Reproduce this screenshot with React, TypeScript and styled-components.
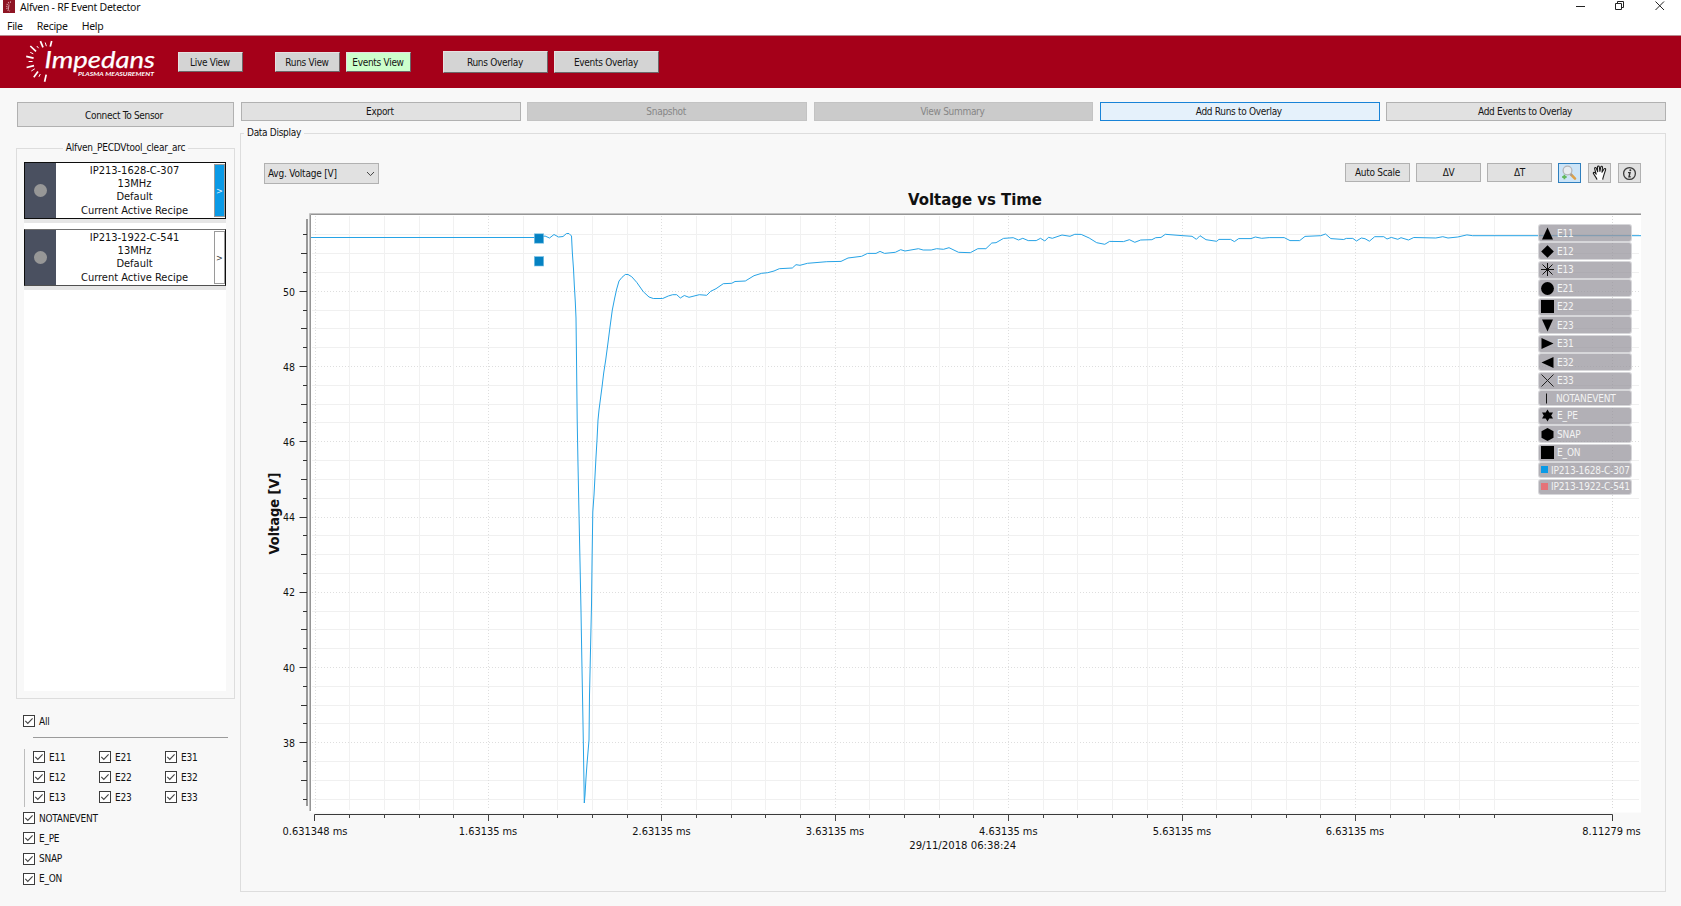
import React from "react";
import styled, { createGlobalStyle, css } from "styled-components";

const ui = `"DejaVu Sans Condensed", "DejaVu Sans", sans-serif`;

const GlobalStyle = createGlobalStyle`
  * { box-sizing: border-box; }
  html, body { margin: 0; padding: 0; background: #f8f8f8; overflow: hidden; }
  body { font-family: ${ui}; font-stretch: condensed; font-size: 10px; color: #111; }
`;

const Window = styled.div`
  width: 1681px;
  height: 906px;
  display: flex;
  flex-direction: column;
  background: #f8f8f8;
  white-space: nowrap;
`;

const Chrome = styled.div`
  height: 35px;
  background: #fff;
  font-family: "Noto Sans", "Open Sans", sans-serif;
  font-size: 10.5px;
  letter-spacing: -0.27px;
`;

const TitleBar = styled.div`
  height: 15px;
  display: flex;
  align-items: flex-start;
  padding-left: 3px;
  line-height: 14px;
`;

const TitleText = styled.span`
  margin-left: 5px;
  flex: 1;
`;

const MenuBar = styled.div`
  display: flex;
  gap: 14px;
  padding: 4px 0 0 7px;
  line-height: 14px;
`;

const Header = styled.header`
  height: 53px;
  background: #a50019;
  border-top: 1px solid #b98a90;
  display: flex;
  align-items: center;
  padding-left: 22px;
`;

const HeaderGroup = styled.div<{ $left: number; $gap: number }>`
  display: flex;
  gap: ${(p) => p.$gap}px;
  margin-left: ${(p) => p.$left}px;
`;

const HeaderButton = styled.button<{ $w: number; $h: number; $active?: boolean }>`
  width: ${(p) => p.$w}px;
  height: ${(p) => p.$h}px;
  padding: 0 1px 0 0;
  font: inherit;
  letter-spacing: -0.3px;
  color: #151515;
  background: ${(p) => (p.$active ? "#ccffcc" : "#d4d4d4")};
  border: 1px solid;
  border-color: #e6e1e2 #6d6668 #6d6668 #e6e1e2;
`;

const Body = styled.main`
  flex: 1;
  display: flex;
  padding: 14px 15px 0 16px;
`;

const Sidebar = styled.aside`
  width: 219px;
  display: flex;
  flex-direction: column;
`;

const FlatButton = styled.button<{ $w?: number; $h: number; $tone?: "off" | "hot" }>`
  ${(p) => (p.$w ? css`width: ${p.$w}px;` : css`flex: 1;`)}
  height: ${(p) => p.$h}px;
  padding: ${(p) => (p.$w ? "0" : "0 2px 0 0")};
  font: inherit;
  letter-spacing: -0.3px;
  color: ${(p) => (p.$tone === "off" ? "#868686" : "#151515")};
  background: ${(p) => (p.$tone === "off" ? "#cbcbcb" : p.$tone === "hot" ? "#e5f1fb" : "#e1e1e1")};
  border: 1px solid ${(p) => (p.$tone === "off" ? "#c3c3c3" : p.$tone === "hot" ? "#1883d7" : "#b1b1b1")};
`;

const ConnectButton = styled(FlatButton)`
  margin: 0 0 15px 1px;
  padding: 2px 3px 0 0;
`;

const Group = styled.fieldset<{ $h: number; $center?: boolean }>`
  margin: 0;
  padding: 0;
  min-width: 0;
  height: ${(p) => p.$h}px;
  border: 1px solid #dddddd;
  legend {
    margin: ${(p) => (p.$center ? "0 auto" : "0 0 0 3px")};
    padding: 0 3px;
    height: 12px;
    line-height: 12px;
    letter-spacing: ${(p) => (p.$center ? "-0.23px" : "-0.3px")};
  }
`;

const SensorList = styled.div`
  margin: 8px 8px 0 7px;
  height: 529px;
  background: #fff;
`;

const SensorCard = styled.div<{ $soft?: boolean }>`
  height: 57px;
  display: flex;
  background: #fff;
  border: 1px solid #0d0d0d;
  border-top-color: ${(p) => (p.$soft ? "#707070" : "#0d0d0d")};
  border-bottom-color: ${(p) => (p.$soft ? "#505050" : "#0d0d0d")};
`;

const CardShadow = styled.div`
  height: 4px;
  margin-bottom: 6px;
  background: #e6e6e6;
`;

const Lamp = styled.div`
  width: 31px;
  background: #4a5060;
  display: flex;
  align-items: center;
  justify-content: center;
  &::after {
    content: "";
    width: 13px;
    height: 13px;
    border-radius: 50%;
    background: #979797;
  }
`;

const SensorText = styled.div`
  flex: 1;
  text-align: center;
  font-size: 11px;
  line-height: 13.2px;
  padding: 1px 1px 0 0;
`;

const Expand = styled.div<{ $on?: boolean }>`
  width: 11px;
  margin: 1px 0;
  display: flex;
  align-items: center;
  justify-content: center;
  border: 1px solid #9a9a9a;
  background: ${(p) => (p.$on ? "#0a9ae6" : "#fff")};
  color: ${(p) => (p.$on ? "#e8f6ff" : "#333")};
  font-size: 9px;
`;

const Filters = styled.div`
  padding: 15px 7px 0;
  display: flex;
  flex-direction: column;
`;

const Check = styled.label`
  display: flex;
  align-items: center;
  height: 14px;
  gap: 4px;
  letter-spacing: -0.25px;
`;

const Divider = styled.div`
  height: 1px;
  background: #9b9b9b;
  margin: 9px 0 11px 10px;
`;

const CheckGrid = styled.div`
  display: grid;
  grid-template-columns: 66px 66px 50px;
  row-gap: 6px;
  padding: 1px 0 0 8px;
  border-left: 1px solid #bdbdbd;
  height: 58px;
  margin-left: 1px;
  align-content: start;
`;

const CheckColumn = styled.div`
  display: flex;
  flex-direction: column;
  gap: 6.3px;
  padding-top: 4px;
`;

const Content = styled.section`
  flex: 1;
  margin-left: 5px;
  display: flex;
  flex-direction: column;
`;

const ActionRow = styled.div`
  display: flex;
  gap: 6.5px;
  padding-left: 1px;
  margin-bottom: 6px;
`;

const PlotToolbar = styled.div`
  height: 25px;
  margin-top: 24px;
  padding: 0 24px 0 23px;
  display: flex;
  gap: 6px;
  align-items: flex-start;
`;

const Combo = styled.div`
  width: 115px;
  height: 21px;
  margin-right: auto;
  padding: 0 3px;
  display: flex;
  align-items: center;
  justify-content: space-between;
  background: #e1e1e1;
  border: 1px solid #b1b1b1;
  letter-spacing: -0.2px;
`;

const ToolButton = styled.button<{ $on?: boolean }>`
  width: 23px;
  height: 20px;
  padding: 0;
  margin-right: 1px;
  display: flex;
  align-items: center;
  justify-content: center;
  background: ${(p) => (p.$on ? "#cce4f7" : "#e1e1e1")};
  border: 1px solid ${(p) => (p.$on ? "#2f7fbe" : "#b1b1b1")};
  &:last-child { margin-right: 0; }
`;

const PlotArea = styled.div`
  position: relative;
  height: 690px;
`;

const Legend = styled.div`
  position: absolute;
  left: 1297px;
  top: 36px;
  width: 94px;
  display: flex;
  flex-direction: column;
  gap: 0.45px;
`;

const LegendItem = styled.div<{ $short?: boolean; $sep: number }>`
  height: ${(p) => (p.$short ? 16.3 : 18)}px;
  display: flex;
  align-items: center;
  gap: ${(p) => p.$sep}px;
  padding-left: 2px;
  color: #f3f3f3;
  letter-spacing: -0.15px;
  background: rgba(151, 149, 156, 0.74);
  border: 1px solid rgba(225, 225, 228, 0.8);
  border-radius: 3px;
`;

const CheckItem = ({ label }: { label: string }) => (
  <Check>
    <svg width="12" height="12" viewBox="0 0 12 12">
      <rect x="0.5" y="0.5" width="11" height="11" fill="#fff" stroke="#3c3c3c" />
      <path d="M2.3 5.8 L4.8 8.4 L9.6 3.4" fill="none" stroke="#444" strokeWidth="1.1" />
    </svg>
    {label}
  </Check>
);

const Sensor = ({ name, on }: { name: string; on?: boolean }) => (
  <>
    <SensorCard $soft={!on}>
      <Lamp />
      <SensorText>
        <div>{name}</div>
        <div>13MHz</div>
        <div>Default</div>
        <div>Current Active Recipe</div>
      </SensorText>
      <Expand $on={on}>&gt;</Expand>
    </SensorCard>
    <CardShadow />
  </>
);

const rays: [number, number, number, number][] = [
  [51.7, 41, 50.3, 46.6],
  [45.2, 42.5, 46.4, 46.2],
  [40.4, 41.2, 43, 47.4],
  [36.8, 46, 38.6, 48.2],
  [30.3, 46, 36, 51.3],
  [30.2, 52.3, 33.3, 53.8],
  [26.2, 56.4, 33.6, 58.2],
  [28.6, 61.5, 32.6, 61.5],
  [26.6, 67.5, 34, 65.6],
  [31.3, 71, 34.8, 68.8],
  [33.8, 77.3, 38, 71.6],
  [38.9, 76.8, 40.3, 74],
  [44.6, 81.8, 46.2, 74.6],
];

const Logo = () => (
  <svg width="136" height="46" viewBox="22 39 136 46">
    <g stroke="#fff">
      {rays.map(([a, b, c, d], i) => (
        <line key={i} x1={a} y1={b} x2={c} y2={d} strokeWidth={i % 2 ? 1 : 1.7} />
      ))}
    </g>
    <text x="44.5" y="68" fill="#fff" fontFamily="Lato, sans-serif" fontStyle="italic" fontWeight="400" fontSize="24" textLength="110.5" lengthAdjust="spacingAndGlyphs" stroke="#fff" strokeWidth="0.25">Impedans</text>
    <text x="78" y="76" fill="#fff" fontFamily="Lato, sans-serif" fontStyle="italic" fontWeight="700" fontSize="6" textLength="76" lengthAdjust="spacingAndGlyphs">PLASMA MEASUREMENT</text>
  </svg>
);

const AppIcon = () => (
  <svg width="12" height="13" viewBox="0 0 12 13">
    <rect width="12" height="13" fill="#8e1524" />
    <path d="M8 2 A4.6 4.6 0 0 0 7 11" fill="none" stroke="#d99aa2" strokeWidth="1.6" strokeDasharray="1 1" />
    <path d="M6 4.5 L5.4 9" stroke="#e7c0c5" strokeWidth="0.8" />
  </svg>
);

const WindowControls = () => (
  <svg width="106" height="15" viewBox="-5 0 106 15" fill="none" stroke="#222" strokeWidth="1">
    <path d="M-4 6.5 H5" />
    <path d="M35.5 3.5 H41.5 V9.5 H35.5 Z M37.5 3.5 V1.5 H43.5 V7.5 H41.5" />
    <path d="M75.5 1.5 L84 10 M84 1.5 L75.5 10" />
  </svg>
);

const MagnifierIcon = () => (
  <svg width="17" height="16" viewBox="0 0 17 16">
    <path d="M9.5 9 L14 13.6" stroke="#dda04a" strokeWidth="2.6" strokeLinecap="round" />
    <path d="M9 8.5 L11 10.5" stroke="#9b9b9b" strokeWidth="1.6" />
    <circle cx="6.5" cy="5.5" r="4.4" fill="#e8ecf0" stroke="#b5b5b8" strokeWidth="1.3" />
    <path d="M3.4 9.8 V14.2 M1.2 12 H5.6" stroke="#62b85c" strokeWidth="1.8" />
  </svg>
);

const HandIcon = () => (
  <svg width="16" height="16" viewBox="0 0 16 16">
    <path
      d="M5 15 C4.6 12.8 2 10 1.3 8.3 C1.2 7.2 2.5 7 3.2 7.9 L4.2 9.2 L2.6 3.6 C2.5 2.3 3.9 2.2 4.3 3.2 L5.7 6.8 L5.5 1.8 C5.7 0.7 7 0.7 7.3 1.8 L7.9 6.5 L8.8 1.9 C9.2 0.9 10.5 1.2 10.5 2.3 L10 7.2 L12 4 C12.7 3 14 3.6 13.6 4.8 L12 9.6 C11.4 12 10.9 12.8 10.7 15 Z"
      fill="#fff"
    />
    <path
      d="M5 14.6 C4.6 12.8 2 10 1.3 8.3 C1.2 7.2 2.5 7 3.2 7.9 L4.2 9.2 L2.6 3.6 C2.5 2.3 3.9 2.2 4.3 3.2 L5.7 6.8 L5.5 1.8 C5.7 0.7 7 0.7 7.3 1.8 L7.9 6.5 L8.8 1.9 C9.2 0.9 10.5 1.2 10.5 2.3 L10 7.2 L12 4 C12.7 3 14 3.6 13.6 4.8 L12 9.6 C11.4 12 10.9 12.8 10.7 14.6"
      fill="none" stroke="#1b1b1b" strokeWidth="1.1" strokeLinejoin="round"
    />
  </svg>
);

const InfoIcon = () => (
  <svg width="15" height="15" viewBox="0 0 15 15">
    <circle cx="7.5" cy="7.5" r="5.9" fill="none" stroke="#3c3c3c" strokeWidth="1.3" />
    <path d="M6 6.6 H8 L7 10.8 H8.6" fill="none" stroke="#333" strokeWidth="1.4" />
    <circle cx="8.3" cy="4.2" r="1" fill="#333" />
  </svg>
);

const Glyph = ({ kind }: { kind: string }) => {
  const shapes: Record<string, React.ReactNode> = {
    up: <path d="M6.5 0.5 L12 12.5 H1 Z" />,
    diamond: <path d="M6.5 0.2 L12.8 6.5 L6.5 12.8 L0.2 6.5 Z" />,
    star: <path d="M6.5 0 V13 M0 6.5 H13 M1.5 1.5 L11.5 11.5 M11.5 1.5 L1.5 11.5" stroke="#111" strokeWidth="1" />,
    circle: <circle cx="6.5" cy="6.5" r="6.4" />,
    square: <rect width="13" height="13" />,
    down: <path d="M1 0.5 H12 L6.5 12.5 Z" />,
    right: <path d="M0.5 1 L12.5 6.5 L0.5 12 Z" />,
    left: <path d="M12.5 1 L0.5 6.5 L12.5 12 Z" />,
    cross: <path d="M0.5 0.5 L12.5 12.5 M12.5 0.5 L0.5 12.5" stroke="#222" strokeWidth="1" />,
    bar: <path d="M5.5 1.5 V11.5" stroke="#111" strokeWidth="1" />,
    hexagram: <path d="M6.5 0.5 L8.3 3.5 H12 L10.2 6.5 L12 9.5 H8.3 L6.5 12.5 L4.7 9.5 H1 L2.8 6.5 L1 3.5 H4.7 Z" />,
    hexagon: <path d="M6.5 0 L12.5 3.2 V9.8 L6.5 13 L0.5 9.8 V3.2 Z" />,
  };
  return <svg width="13" height="13" viewBox="0 0 13 13">{shapes[kind]}</svg>;
};

const Swatch = styled.span<{ $c: string }>`
  width: 7px;
  height: 7px;
  margin-bottom: 1px;
  background: ${(p) => p.$c};
`;

const legendItems: [string, string][] = [
  ["up", "E11"], ["diamond", "E12"], ["star", "E13"], ["circle", "E21"], ["square", "E22"],
  ["down", "E23"], ["right", "E31"], ["left", "E32"], ["cross", "E33"], ["bar", "NOTANEVENT"],
  ["hexagram", "E_PE"], ["hexagon", "SNAP"], ["square", "E_ON"],
];

const trace =
  "311,237.5 540,237.5 545,236 549.5,238 554,234.5 558.5,237 563,236.5 566.5,233.5 569,233.5 571.5,236 572.3,252 573.5,269 574.3,285 575.3,302 576,318 576.6,367 577.2,420 578,465 579,514 580,562 581,611 581.8,658 582.7,706 583.5,753 584.3,803 " +
  "585,795 586,778 587,764 588,752 589,740 589.5,695 590.5,650 591.5,605 592.1,557 592.8,512 594,495 595,476 596,457 597,440 598,420 599,410 600.7,397 602,387 603.7,373 605.7,360 607.7,345 610,327 612.3,310 614.7,298 616.7,289 619,281 622,277.3 625.3,274.5 628,274.5 631.7,276.7 636.7,282.3 643.3,291.7 649,297 653.3,298.5 662.7,298.5 668.3,296 672.7,294.7 676.7,294.7 680.3,298 684.3,295.5 689,297.3 699.3,294.7 706.7,295.3 710.7,291.3 716,288.7 723.3,283.7 731.7,283.3 735,281.5 745.3,281 754,275.7 761.7,273.3 767.7,272.7 774,271 779.3,268.7 792.3,268 796,264.7 800,265.3 " +
  "807.5,263.3 826.8,261.7 841,261.4 848,258 861.6,256.3 867.5,253.4 876,253.4 880,251.4 884.6,253.4 895.3,252.3 900.7,249.7 905,251 918.4,248.7 923.2,250 931.2,250 936.6,248.7 943.5,249.3 949,247.7 958.5,252.3 970.3,252.7 977.8,248.7 985.9,248.7 991.8,243 996,242.7 1003.5,238.4 1013.2,237.7 1018.5,240 1022.8,238.3 1028.2,240.6 1036.2,240.6 1040.5,238.3 1044.8,241 1048.5,237.3 1052.3,238.3 1062,235 1070,236.3 1074.8,234.3 1081.2,234.4 1089.2,238 1096.7,242.7 1104.8,244.3 1109.6,241.4 1123.5,241.6 1129.4,239.7 1134.8,242.3 1140.7,240 1151.9,239.7 1155.7,237.7 1161,237.4 1165.3,234.3 1183,235.7 1192,236.3 1196.4,239.3 1200,235.7 1206,239.7 1216.7,241.3 1218.9,239.4 1230.6,239.4 1234.4,241.6 1238.7,238.6 1251,238.6 1255.3,237 1261.7,238.3 1269.2,237.6 1284.2,237.6 1290,240.6 1299.7,240.6 1305,236.4 1320.7,235.7 1325.5,234 1330.8,238.6 1343.7,239.5 1346.3,238.4 1352.8,238.4 1356.5,241 1361.3,238 1365,238.7 1369.4,241.2 1374.7,236.7 1383.8,236.7 1387,239 1391.3,237.4 1397.8,239.3 1401,237.7 1408.5,240 1413.8,237.5 1435.8,238 1442.8,236.7 1448,238 1457.8,237 1466.9,234.9 1472.7,235.7 1641,235.7";

const yAt = (v: number) => 291.3 + (50 - v) * 37.62;
const xAt = (i: number) => 315 + i * 34.68;

const PlotSvg = styled.svg`
  display: block;
  font-family: ${ui};
  fill: #111;
`;

const Plot = () => {
  const rows = Array.from({ length: 31 }, (_, i) => 51.5 - i * 0.5);
  const cols = Array.from({ length: 35 }, (_, i) => i);
  const snap = (n: number) => Math.floor(n) + 0.5;
  const xLabels: [number, string, number][] = [
    [315, "0.631348 ms", 65], [488, "1.63135 ms", 58.5], [661.5, "2.63135 ms", 58.5],
    [835, "3.63135 ms", 58.5], [1008.3, "4.63135 ms", 58.5], [1182, "5.63135 ms", 58.5],
    [1355, "6.63135 ms", 58.5], [1611.5, "8.11279 ms", 58.5],
  ];
  return (
    <PlotSvg width="1424" height="690" viewBox="241 188 1424 690">
      <text x="975" y="205" textAnchor="middle" fontWeight="700" fontSize="16" textLength="134" lengthAdjust="spacingAndGlyphs">Voltage vs Time</text>
      <rect x="310" y="214" width="1331" height="598.5" fill="#fff" />
      {rows.map((v) => {
        const y = snap(yAt(v));
        const major = v % 2 === 0;
        return <line key={v} x1={312} x2={1639} y1={y} y2={y} stroke={major ? "#dedede" : "#f0f0f0"} strokeDasharray={major ? "1 2" : undefined} />;
      })}
      {cols.map((i) => {
        const x = snap(xAt(i));
        const major = i % 5 === 0;
        return <line key={i} x1={x} x2={x} y1={216} y2={810} stroke={major ? "#dedede" : "#f1f1f1"} strokeDasharray={major ? "1 2" : undefined} />;
      })}
      <line x1="1612.5" x2="1612.5" y1="216" y2="810" stroke="#d8d8d8" strokeDasharray="1 2" />
      <path d="M309.5 811 V213.5 H1641" fill="none" stroke="#c2c2c2" />
      <path d="M310.5 811 V214.5 H1641" fill="none" stroke="#959595" />
      <path d="M307 219 V806" stroke="#808080" strokeWidth="1.6" />
      {rows.map((v) => {
        const y = snap(yAt(v));
        const len = v % 2 === 0 ? 7.5 : v % 1 === 0 ? 6 : 4;
        return <line key={v} x1={307 - len} x2={307} y1={y} y2={y} stroke="#333" />;
      })}
      {rows.filter((v) => v % 2 === 0).map((v) => (
        <text key={v} x="295" y={yAt(v) + 4.2} textAnchor="end" fontSize="11" textLength="12" lengthAdjust="spacingAndGlyphs">{v}</text>
      ))}
      <path d="M314.5 821 V814.5 H1612.5 V821" fill="none" stroke="#3a3a3a" />
      {cols.slice(1).map((i) => (
        <line key={i} x1={snap(xAt(i))} x2={snap(xAt(i))} y1="814" y2={i % 5 === 0 ? 821 : 818} stroke="#444" />
      ))}
      {xLabels.map(([x, t, w]) => (
        <text key={t} x={x} y="834.7" textAnchor="middle" fontSize="11" textLength={w} lengthAdjust="spacingAndGlyphs">{t}</text>
      ))}
      <text x="962.7" y="848.5" textAnchor="middle" fontSize="11" textLength="107" lengthAdjust="spacingAndGlyphs">29/11/2018 06:38:24</text>
      <text transform="translate(278.5 513.5) rotate(-90)" textAnchor="middle" fontWeight="700" fontSize="14" textLength="82" lengthAdjust="spacingAndGlyphs">Voltage [V]</text>
      <polyline points={trace} fill="none" stroke="#26a3e6" strokeWidth="1" strokeLinejoin="round" />
      <g fill="#0582c2" stroke="#7fc3e6" strokeWidth="0.6">
        <rect x="534.3" y="233.8" width="9.4" height="9.4" />
        <rect x="534.3" y="256.6" width="9.4" height="9.4" />
      </g>
    </PlotSvg>
  );
};

export default function App() {
  return (
    <Window>
      <GlobalStyle />
      <Chrome>
        <TitleBar>
          <AppIcon />
          <TitleText>Alfven - RF Event Detector</TitleText>
          <WindowControls />
        </TitleBar>
        <MenuBar>
          <span>File</span>
          <span>Recipe</span>
          <span>Help</span>
        </MenuBar>
      </Chrome>
      <Header>
        <Logo />
        <HeaderGroup $left={20} $gap={6}>
          <HeaderButton $w={65} $h={20}>Live View</HeaderButton>
        </HeaderGroup>
        <HeaderGroup $left={32} $gap={6}>
          <HeaderButton $w={65} $h={20}>Runs View</HeaderButton>
          <HeaderButton $w={65} $h={20} $active>Events View</HeaderButton>
        </HeaderGroup>
        <HeaderGroup $left={32} $gap={6}>
          <HeaderButton $w={105} $h={22}>Runs Overlay</HeaderButton>
          <HeaderButton $w={105} $h={22}>Events Overlay</HeaderButton>
        </HeaderGroup>
      </Header>
      <Body>
        <Sidebar>
          <ConnectButton $w={217} $h={25}>Connect To Sensor</ConnectButton>
          <Group $h={557} $center>
            <legend>Alfven_PECDVtool_clear_arc</legend>
            <SensorList>
              <Sensor name="IP213-1628-C-307" on />
              <Sensor name="IP213-1922-C-541" />
            </SensorList>
          </Group>
          <Filters>
            <CheckItem label="All" />
            <Divider />
            <CheckGrid>
              {["E11", "E21", "E31", "E12", "E22", "E32", "E13", "E23", "E33"].map((n) => (
                <CheckItem key={n} label={n} />
              ))}
            </CheckGrid>
            <CheckColumn>
              {["NOTANEVENT", "E_PE", "SNAP", "E_ON"].map((n) => (
                <CheckItem key={n} label={n} />
              ))}
            </CheckColumn>
          </Filters>
        </Sidebar>
        <Content>
          <ActionRow>
            <FlatButton $h={19}>Export</FlatButton>
            <FlatButton $h={19} $tone="off">Snapshot</FlatButton>
            <FlatButton $h={19} $tone="off">View Summary</FlatButton>
            <FlatButton $h={19} $tone="hot">Add Runs to Overlay</FlatButton>
            <FlatButton $h={19}>Add Events to Overlay</FlatButton>
          </ActionRow>
          <Group $h={765}>
            <legend>Data Display</legend>
            <PlotToolbar>
              <Combo>
                Avg. Voltage [V]
                <svg width="9" height="6" viewBox="0 0 9 6">
                  <path d="M1 1 L4.5 4.6 L8 1" fill="none" stroke="#444" />
                </svg>
              </Combo>
              <FlatButton $w={65} $h={19}>Auto Scale</FlatButton>
              <FlatButton $w={65} $h={19}>ΔV</FlatButton>
              <FlatButton $w={65} $h={19}>ΔT</FlatButton>
              <ToolButton $on><MagnifierIcon /></ToolButton>
              <ToolButton><HandIcon /></ToolButton>
              <ToolButton><InfoIcon /></ToolButton>
            </PlotToolbar>
            <PlotArea>
              <Plot />
              <Legend>
                {legendItems.map(([kind, label]) => (
                  <LegendItem key={label} $short={kind === "bar"} $sep={kind === "bar" ? 2 : 3}>
                    <Glyph kind={kind} />
                    {label}
                  </LegendItem>
                ))}
                <LegendItem $short $sep={3}><Swatch $c="#0a9ae6" />IP213-1628-C-307</LegendItem>
                <LegendItem $short $sep={3}><Swatch $c="#e57378" />IP213-1922-C-541</LegendItem>
              </Legend>
            </PlotArea>
          </Group>
        </Content>
      </Body>
    </Window>
  );
}
